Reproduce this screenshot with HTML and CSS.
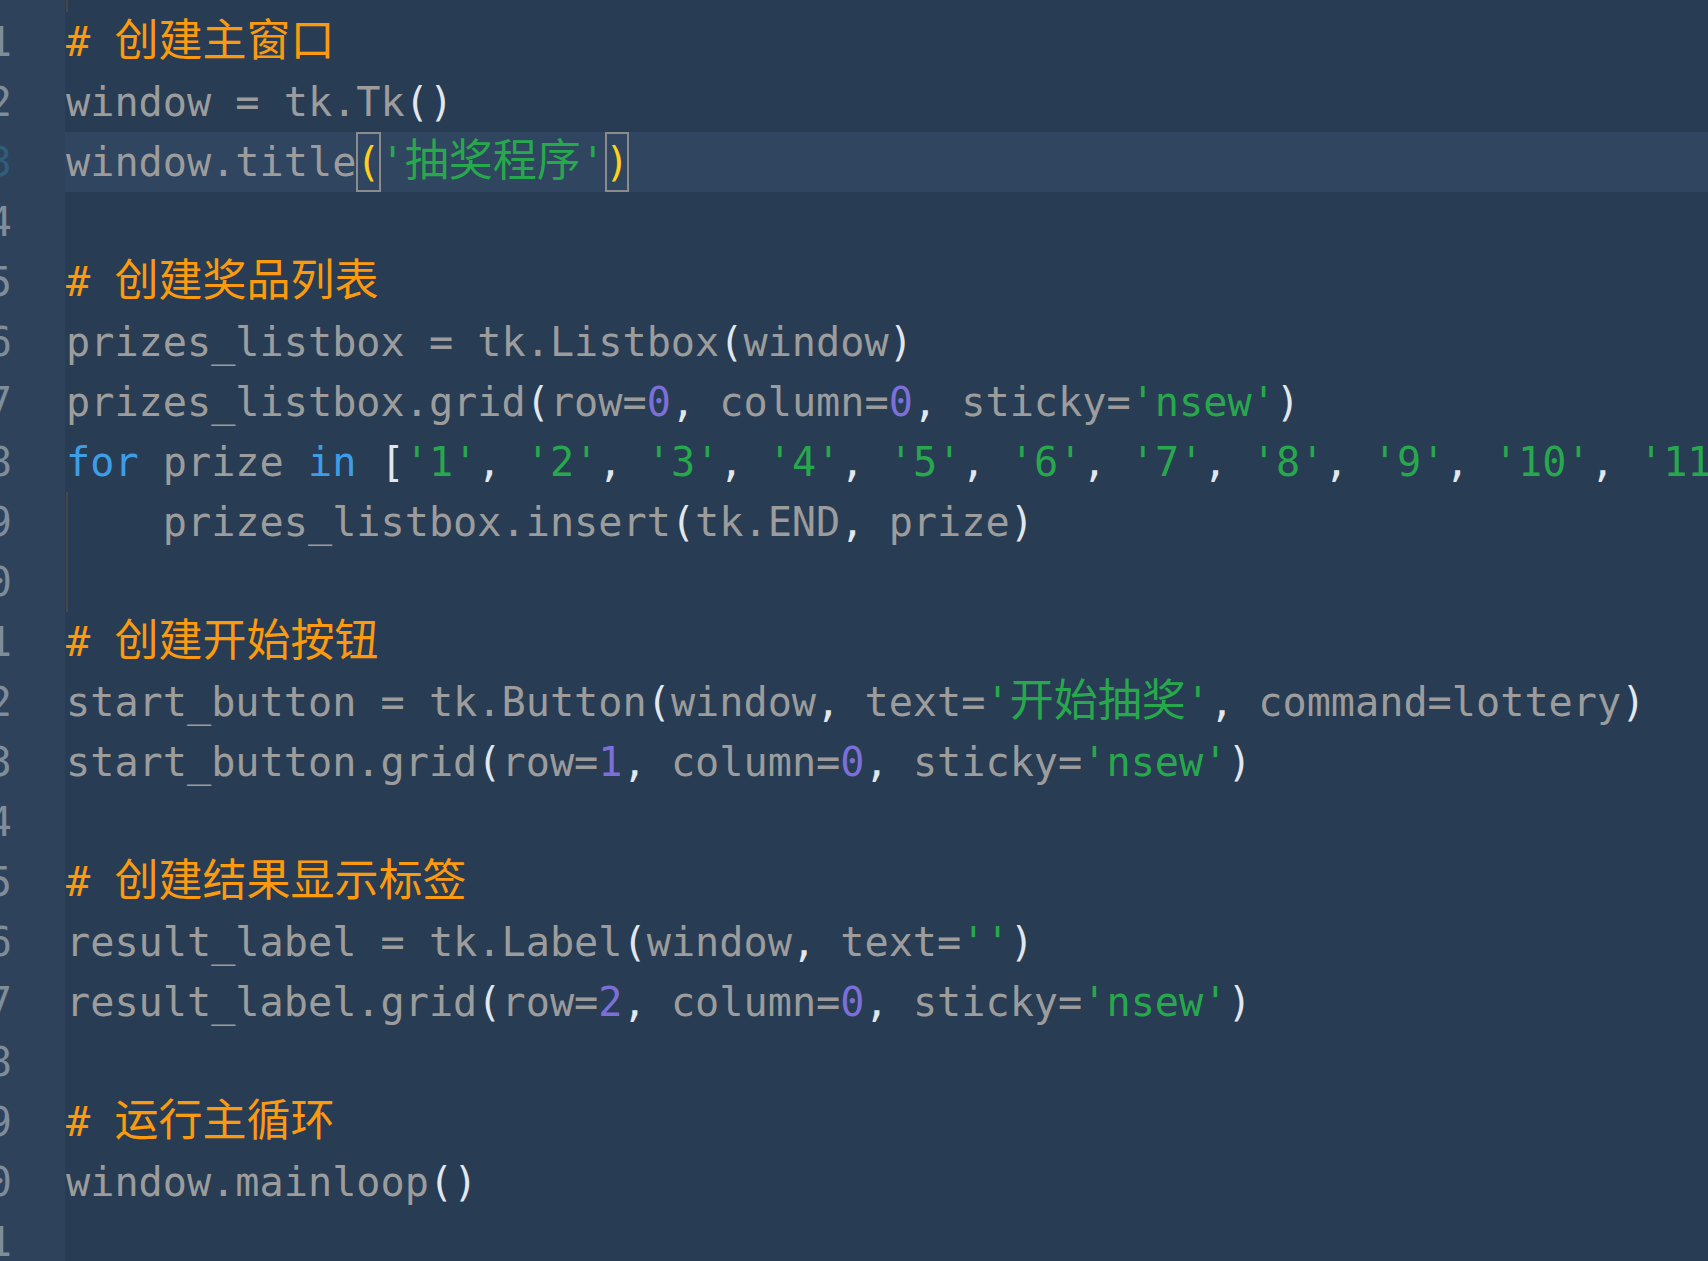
FILE: index.html
```html
<!DOCTYPE html>
<html lang="zh">
<head>
<meta charset="utf-8">
<title>lottery.py</title>
<link rel="stylesheet" href="styles.css">
</head>
<body>
<div class="editor">
  <div class="row row-top"><div class="gutter"></div><div class="code guide"></div></div>
  <div class="row"><div class="gutter"><span>1</span></div><div class="code"><span class="c"># <span class="cjk">创建主窗口</span></span></div></div>
  <div class="row"><div class="gutter"><span>2</span></div><div class="code">window = tk.Tk<span class="p">()</span></div></div>
  <div class="row current"><div class="gutter"><span>3</span></div><div class="code">window.title<span class="m">(</span><span class="s">'<span class="cjk">抽奖程序</span>'</span><span class="m">)</span></div></div>
  <div class="row"><div class="gutter"><span>4</span></div><div class="code"></div></div>
  <div class="row"><div class="gutter"><span>5</span></div><div class="code"><span class="c"># <span class="cjk">创建奖品列表</span></span></div></div>
  <div class="row"><div class="gutter"><span>6</span></div><div class="code">prizes_listbox = tk.Listbox<span class="p">(</span>window<span class="p">)</span></div></div>
  <div class="row"><div class="gutter"><span>7</span></div><div class="code">prizes_listbox.grid<span class="p">(</span>row=<span class="n">0</span><span class="p">,</span> column=<span class="n">0</span><span class="p">,</span> sticky=<span class="s">'nsew'</span><span class="p">)</span></div></div>
  <div class="row"><div class="gutter"><span>8</span></div><div class="code"><span class="k">for</span> prize <span class="k">in</span> <span class="p">[</span><span class="s">'1'</span><span class="p">,</span> <span class="s">'2'</span><span class="p">,</span> <span class="s">'3'</span><span class="p">,</span> <span class="s">'4'</span><span class="p">,</span> <span class="s">'5'</span><span class="p">,</span> <span class="s">'6'</span><span class="p">,</span> <span class="s">'7'</span><span class="p">,</span> <span class="s">'8'</span><span class="p">,</span> <span class="s">'9'</span><span class="p">,</span> <span class="s">'10'</span><span class="p">,</span> <span class="s">'11'</span><span class="p">,</span> <span class="s">'12'</span><span class="p">]</span>:</div></div>
  <div class="row"><div class="gutter"><span>9</span></div><div class="code guide">    prizes_listbox.insert<span class="p">(</span>tk.END<span class="p">,</span> prize<span class="p">)</span></div></div>
  <div class="row"><div class="gutter"><span>10</span></div><div class="code guide"></div></div>
  <div class="row"><div class="gutter"><span>11</span></div><div class="code"><span class="c"># <span class="cjk">创建开始按钮</span></span></div></div>
  <div class="row"><div class="gutter"><span>12</span></div><div class="code">start_button = tk.Button<span class="p">(</span>window<span class="p">,</span> text=<span class="s">'<span class="cjk">开始抽奖</span>'</span><span class="p">,</span> command=lottery<span class="p">)</span></div></div>
  <div class="row"><div class="gutter"><span>13</span></div><div class="code">start_button.grid<span class="p">(</span>row=<span class="n">1</span><span class="p">,</span> column=<span class="n">0</span><span class="p">,</span> sticky=<span class="s">'nsew'</span><span class="p">)</span></div></div>
  <div class="row"><div class="gutter"><span>14</span></div><div class="code"></div></div>
  <div class="row"><div class="gutter"><span>15</span></div><div class="code"><span class="c"># <span class="cjk">创建结果显示标签</span></span></div></div>
  <div class="row"><div class="gutter"><span>16</span></div><div class="code">result_label = tk.Label<span class="p">(</span>window<span class="p">,</span> text=<span class="s">''</span><span class="p">)</span></div></div>
  <div class="row"><div class="gutter"><span>17</span></div><div class="code">result_label.grid<span class="p">(</span>row=<span class="n">2</span><span class="p">,</span> column=<span class="n">0</span><span class="p">,</span> sticky=<span class="s">'nsew'</span><span class="p">)</span></div></div>
  <div class="row"><div class="gutter"><span>18</span></div><div class="code"></div></div>
  <div class="row"><div class="gutter"><span>19</span></div><div class="code"><span class="c"># <span class="cjk">运行主循环</span></span></div></div>
  <div class="row"><div class="gutter"><span>20</span></div><div class="code">window.mainloop<span class="p">()</span></div></div>
  <div class="row"><div class="gutter"><span>21</span></div><div class="code"></div></div>
</div>
</body>
</html>
```

FILE: styles.css
```css
html, body {
  margin: 0;
  padding: 0;
  background: #283d54;
  overflow: hidden;
}

.editor {
  display: flex;
  flex-direction: column;
  width: 1708px;
  height: 1261px;
  overflow: hidden;
  font-family: "DejaVu Sans Mono", "Liberation Mono", "Noto Sans CJK SC", monospace;
  font-size: 40.2px;
  line-height: 60px;
  color: #9c9c9c;
}

.row {
  display: flex;
  height: 60px;
  flex: 0 0 60px;
}

.row-top {
  height: 12px;
  flex: 0 0 12px;
}

.gutter {
  flex: 0 0 65px;
  width: 65px;
  box-sizing: border-box;
  padding-right: 53px;
  display: flex;
  justify-content: flex-end;
  overflow: hidden;
  background: #2e435b;
  color: #7f8c9a;
  white-space: pre;
}

.code {
  flex: 1 1 auto;
  padding-left: 1px;
  white-space: pre;
  overflow: visible;
}

.current .code {
  background-color: #2f4560;
}

.current .gutter {
  color: #2f5d7a;
}

.guide {
  background-image: linear-gradient(#47464a, #47464a);
  background-size: 2px 100%;
  background-position: 1px 0;
  background-repeat: no-repeat;
}

.cjk {
  font-family: "Noto Sans CJK SC", sans-serif;
  font-size: 44px;
  line-height: 1;
}

.c { color: #fb9a0f; }
.s { color: #28a84d; }
.n { color: #7c70d8; }
.k { color: #3f9de8; }
.p { color: #e1e7ed; }

.m {
  display: inline-block;
  height: 60px;
  line-height: 60px;
  vertical-align: top;
  color: #ffcf1a;
  outline: 2px solid #8b8b8b;
  outline-offset: -2px;
}
```
